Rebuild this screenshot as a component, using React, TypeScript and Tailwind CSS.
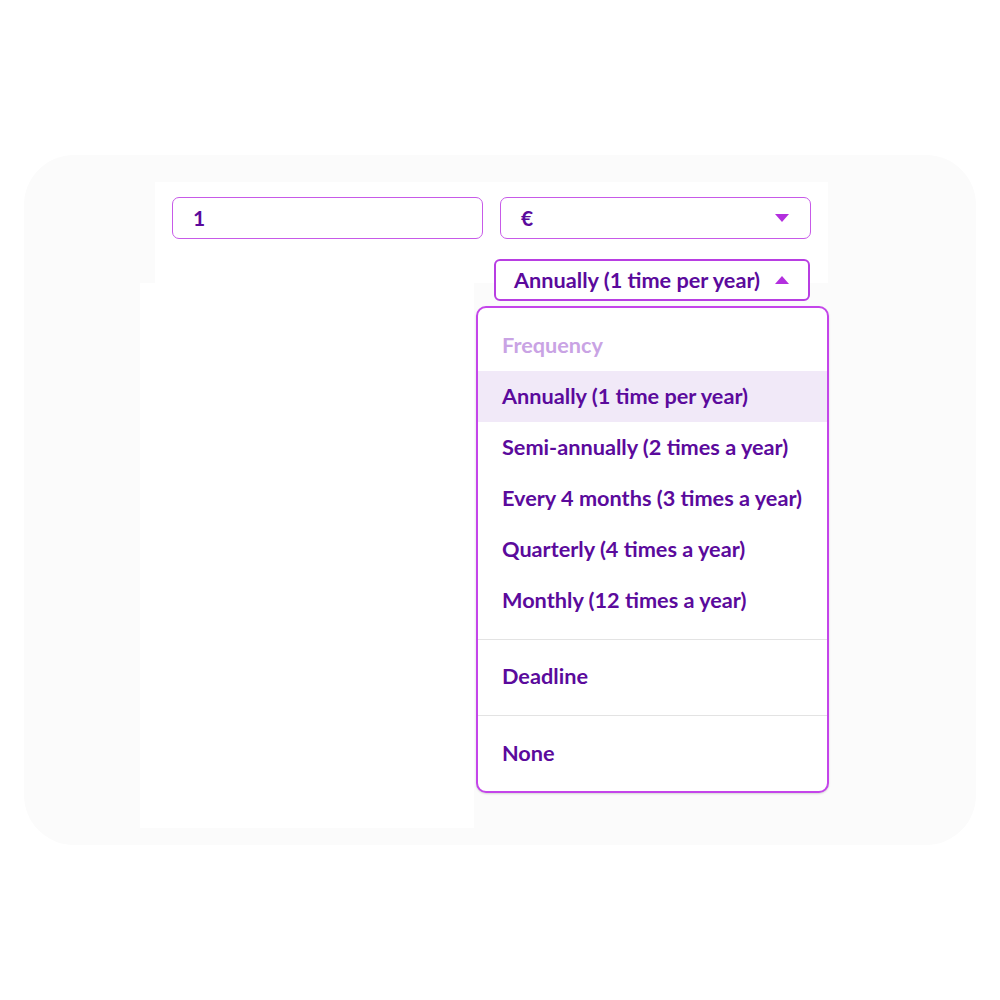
import React from "react";

const font = { fontFamily: "Lato, 'Open Sans', sans-serif" };

function CaretDown() {
  return (
    <svg width="14" height="8" viewBox="0 0 14 8">
      <path d="M0 0 L14 0 L7 8 Z" fill="#b32fde" />
    </svg>
  );
}
function CaretUp() {
  return (
    <svg width="14" height="8" viewBox="0 0 14 8">
      <path d="M0 8 L14 8 L7 0 Z" fill="#b32fde" />
    </svg>
  );
}

const items = [
  "Annually (1 time per year)",
  "Semi-annually (2 times a year)",
  "Every 4 months (3 times a year)",
  "Quarterly (4 times a year)",
  "Monthly (12 times a year)",
];

export default function App() {
  return (
    <div className="w-[1000px] h-[1000px] bg-white pt-[155px]" style={font}>
      <div className="relative mx-[24px] h-[690px] rounded-[50px] bg-[#fbfbfb] pt-[27px]">
        <div className="ml-[131px] w-[673px] h-[101px] bg-white px-[17px] pt-[15px]">
          <div className="flex gap-[17px]">
            <div className="w-[311px] h-[42px] rounded-[7px] border-[1.5px] border-[#c75ae8] flex items-center pl-[20px] text-[21px] font-bold text-[#5b0a9c]">
              1
            </div>
            <div className="w-[311px] h-[42px] rounded-[7px] border-[1.5px] border-[#c75ae8] flex items-center justify-between pl-[20px] pr-[21px] text-[21px] font-bold text-[#5b0a9c]">
              <span>€</span>
              <CaretDown />
            </div>
          </div>
          <div className="mt-[20px] ml-[322px] w-[316px] h-[42px] rounded-[6px] border-2 border-[#b83ee2] bg-white flex items-center justify-between pl-[18px] pr-[19px] text-[21.7px] font-bold text-[#5b0a9c]">
            <span>Annually (1 time per year)</span>
            <CaretUp />
          </div>
        </div>
        <div className="ml-[116px] w-[334px] h-[545px] bg-white" />

        <div className="absolute left-[452px] top-[151px] w-[353px] h-[487px] rounded-[10px] border-2 border-[#c445ea] bg-white shadow-[0_1px_2px_rgba(0,0,0,0.15)] text-[21.7px] font-bold text-[#5b0a9c] flex flex-col">
          <div className="pt-[12px] pb-[13px]">
            <div className="h-[51px] flex items-center px-[24px] text-[#c9a3e4]">
              Frequency
            </div>
            {items.map((t, i) => (
              <div
                key={t}
                className={
                  i === 0
                    ? "h-[51px] flex items-center px-[24px] bg-[#f1e9f8]"
                    : "h-[51px] flex items-center px-[24px]"
                }
              >
                {t}
              </div>
            ))}
          </div>
          <div className="h-px bg-[#e3e3e3]" />
          <div className="h-[75px] flex items-center px-[24px] pb-[2px]">Deadline</div>
          <div className="h-px bg-[#e3e3e3]" />
          <div className="h-[75px] flex items-center px-[24px]">None</div>
        </div>
      </div>
    </div>
  );
}
